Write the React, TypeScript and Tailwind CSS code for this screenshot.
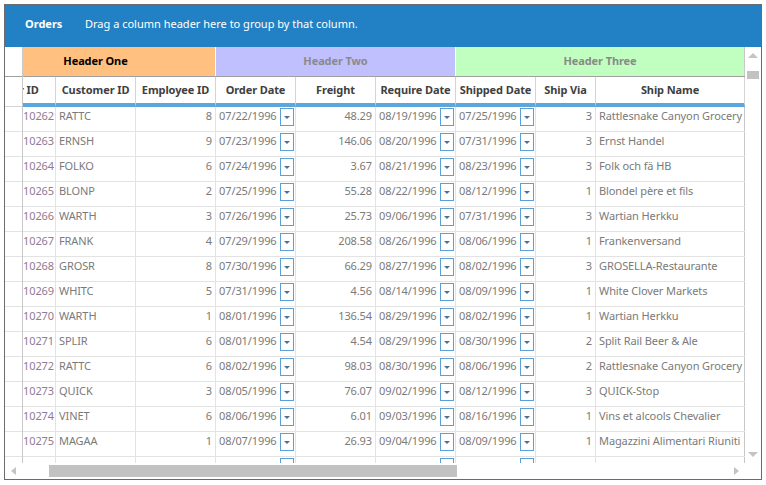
const rows = [
  ["10262", "RATTC", "8", "07/22/1996", "48.29", "08/19/1996", "07/25/1996", "3", "Rattlesnake Canyon Grocery"],
  ["10263", "ERNSH", "9", "07/23/1996", "146.06", "08/20/1996", "07/31/1996", "3", "Ernst Handel"],
  ["10264", "FOLKO", "6", "07/24/1996", "3.67", "08/21/1996", "08/23/1996", "3", "Folk och fä HB"],
  ["10265", "BLONP", "2", "07/25/1996", "55.28", "08/22/1996", "08/12/1996", "1", "Blondel père et fils"],
  ["10266", "WARTH", "3", "07/26/1996", "25.73", "09/06/1996", "07/31/1996", "3", "Wartian Herkku"],
  ["10267", "FRANK", "4", "07/29/1996", "208.58", "08/26/1996", "08/06/1996", "1", "Frankenversand"],
  ["10268", "GROSR", "8", "07/30/1996", "66.29", "08/27/1996", "08/02/1996", "3", "GROSELLA-Restaurante"],
  ["10269", "WHITC", "5", "07/31/1996", "4.56", "08/14/1996", "08/09/1996", "1", "White Clover Markets"],
  ["10270", "WARTH", "1", "08/01/1996", "136.54", "08/29/1996", "08/02/1996", "1", "Wartian Herkku"],
  ["10271", "SPLIR", "6", "08/01/1996", "4.54", "08/29/1996", "08/30/1996", "2", "Split Rail Beer & Ale"],
  ["10272", "RATTC", "6", "08/02/1996", "98.03", "08/30/1996", "08/06/1996", "2", "Rattlesnake Canyon Grocery"],
  ["10273", "QUICK", "3", "08/05/1996", "76.07", "09/02/1996", "08/12/1996", "3", "QUICK-Stop"],
  ["10274", "VINET", "6", "08/06/1996", "6.01", "09/03/1996", "08/16/1996", "1", "Vins et alcools Chevalier"],
  ["10275", "MAGAA", "1", "08/07/1996", "26.93", "09/04/1996", "08/09/1996", "1", "Magazzini Alimentari Riuniti"],
  // only the top edge of this row shows under the last full row
  ["10276", "", "", "", "", "", "", "", ""],
];

const cell = "h-full border-r border-[#e3e3e3] flex items-center pb-[5px] overflow-hidden whitespace-nowrap";

const DateCell = ({ v }: { v: string }) => (
  <div className="w-[80px] h-full border-r border-[#e3e3e3] flex items-start justify-between">
    <span className="pl-[3px] self-center pb-[5px]">{v}</span>
    <span className="mt-[1px] mr-[1px] w-[14px] h-[18px] border border-[#5b9fd6] bg-white flex items-center justify-center">
      <span className="border-x-[3px] border-x-transparent border-t-[3px] border-t-[#4f6f93]" />
    </span>
  </div>
);

const headers = [
  ["Order ID", "w-[80px]"],
  ["Customer ID", "w-[80px]"],
  ["Employee ID", "w-[80px]"],
  ["Order Date", "w-[80px]"],
  ["Freight", "w-[80px]"],
  ["Require Date", "w-[80px]"],
  ["Shipped Date", "w-[80px]"],
  ["Ship Via", "w-[60px]"],
  ["Ship Name", "w-[149px]"],
];

export default function App() {
  return (
    <div className="w-[766px] h-[485px] bg-white pt-[4px] pl-[4px] font-['Noto_Sans',sans-serif] text-[11px] tracking-[-0.1px] text-[#7a7a7a]">
      <div className="w-[758px] h-[476px] border border-[#6b6b6b] flex flex-col">
        {/* group panel */}
        <div className="h-[42px] shrink-0 bg-[#2181c4] flex items-center pb-[3px] pl-[20px] text-white tracking-normal">
          <span className="font-bold w-[60px]">Orders</span>
          <span>Drag a column header here to group by that column.</span>
        </div>

        <div className="flex h-[416px] shrink-0">
          {/* row indicators */}
          <div className="w-[18px] shrink-0 border-r border-[#c8c8c8] flex flex-col overflow-hidden">
            <div className="h-[30px] shrink-0 border-b border-[#a0a0a0]" />
            <div className="h-[30px] shrink-0 border-b border-[#d4d4d4]" />
            {rows.map((r) => (
              <div key={r[0]} className="h-[25px] shrink-0 border-b border-[#e3e3e3]" />
            ))}
          </div>

          {/* grid viewport, scrolled 47px to the right */}
          <div className="w-[722px] shrink-0 overflow-hidden">
            <div className="-ml-[47px] w-max">
              <div className="h-[30px] flex border-b border-[#a0a0a0] font-bold">
                <div className="w-[240px] bg-[#ffc080] border-r border-white flex items-center justify-center text-black">Header One</div>
                <div className="w-[240px] bg-[#c0c0ff] border-r border-white flex items-center justify-center text-[#8a8a8a]">Header Two</div>
                <div className="w-[289px] bg-[#c0ffc0] border-r border-[#c8c8c8] flex items-center justify-center text-[#8a8a8a]">Header Three</div>
              </div>
              <div className="h-[30px] flex font-bold text-[#404040]">
                {headers.map(([t, w]) => (
                  <div key={t} className={`${w} h-full border-r border-[#d4d4d4] border-b-[4px] border-b-[#5ba6dc] flex items-center justify-center whitespace-nowrap overflow-hidden`}>
                    {t}
                  </div>
                ))}
              </div>
              {rows.map((r) => (
                <div key={r[0]} className="h-[25px] flex border-b border-[#e3e3e3]">
                  <div className={`${cell} w-[80px] justify-end pr-[1px] text-[#917a93]`}>{r[1] ? r[0] : ""}</div>
                  <div className={`${cell} w-[80px] pl-[3px]`}>{r[1]}</div>
                  <div className={`${cell} w-[80px] justify-end pr-[3px]`}>{r[2]}</div>
                  <DateCell v={r[3]} />
                  <div className={`${cell} w-[80px] justify-end pr-[3px]`}>{r[4]}</div>
                  <DateCell v={r[5]} />
                  <DateCell v={r[6]} />
                  <div className={`${cell} w-[60px] justify-end pr-[3px]`}>{r[7]}</div>
                  <div className={`${cell} w-[149px] pl-[3px] border-r-[#c8c8c8]`}>{r[8]}</div>
                </div>
              ))}
            </div>
          </div>

          {/* vertical scrollbar */}
          <div className="w-[16px] shrink-0 flex flex-col items-center">
            <div className="h-[17px] w-full flex items-center justify-center">
              <span className="border-x-[5px] border-x-transparent border-b-[5px] border-b-[#c4c4c4]" />
            </div>
            <div className="mt-[7px] h-[8px] w-[12px] bg-[#c2c2c2]" />
            <div className="flex-1" />
            <div className="h-[17px] w-full flex items-center justify-center">
              <span className="border-x-[5px] border-x-transparent border-t-[5px] border-t-[#c4c4c4]" />
            </div>
          </div>
        </div>

        {/* horizontal scrollbar */}
        <div className="h-[16px] shrink-0 flex">
          <div className="w-[740px] flex items-center">
            <div className="w-[17px] h-full flex items-center justify-center">
              <span className="border-y-[4px] border-y-transparent border-r-[5px] border-r-[#c4c4c4]" />
            </div>
            <div className="flex-1 h-full flex items-center">
              <div className="ml-[27px] w-[408px] h-[12px] bg-[#c2c2c2]" />
            </div>
            <div className="w-[17px] h-full flex items-center justify-center">
              <span className="border-y-[4px] border-y-transparent border-l-[5px] border-l-[#c4c4c4]" />
            </div>
          </div>
          <div className="w-[16px]" />
        </div>
      </div>
    </div>
  );
}
